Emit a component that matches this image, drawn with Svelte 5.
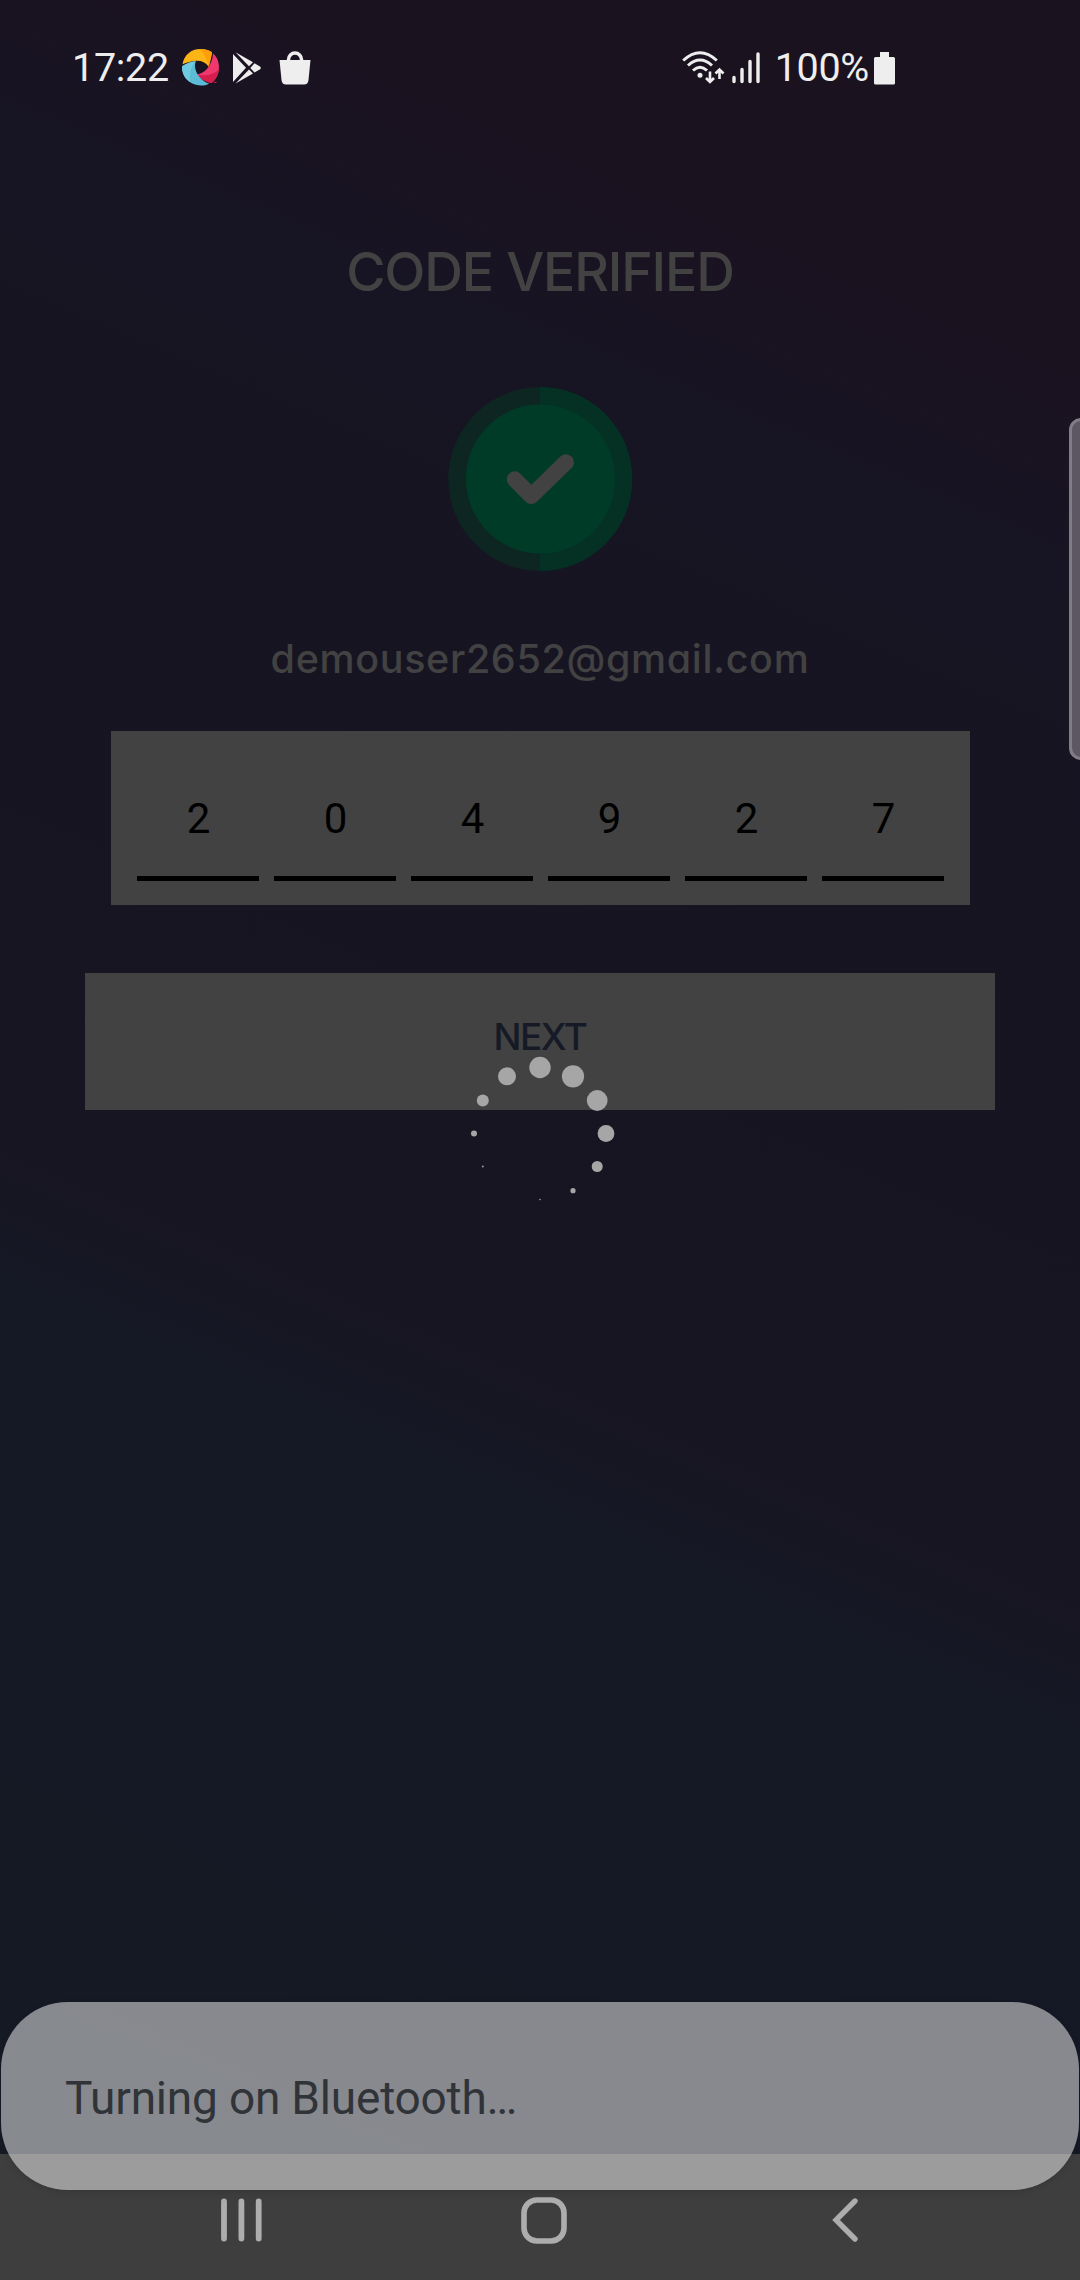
<script>
  const digits = ['2', '0', '4', '9', '2', '7'];
  const dots = [
    [72.5, 12.5, 10.7], [105.5, 21.3, 11.1], [129.7, 45.5, 10.4], [138.5, 78.5, 8.4],
    [129.7, 111.5, 5.5], [105.5, 135.7, 2.6], [72.5, 144.5, 0.8], [15.3, 111.5, 0.9],
    [6.5, 78.5, 3], [15.3, 45.5, 6], [39.5, 21.3, 9],
  ];
</script>

<div class="screen">
  <header class="status">
    <div class="left">
      <span class="time">17:22</span>
      <svg class="swirl" viewBox="0 0 38 38">
        <path d="M.5 15.5C2 6 9.500 0 18.500 0 24 0 28 1.500 30.500 3.500 29.500 9 28.500 13.500 27 18 22 10.500 13 10.500 .5 15.500Z" fill="#fdb515" />
        <path d="M18.500 0C24 0 28 1.500 30.500 3.500L27 18C26 12 23 5 18.500 0Z" fill="#ff9d0a" />
        <path d="M31.500 4.500C36 8.500 38 14 37.300 21 36.500 28 33 32 30 34.500 23.500 33 18 30 15 25.500 23 25 30.500 17 31.500 4.500Z" fill="#f0386f" />
        <path d="M37.300 21C36.500 28 33 32 30 34.500 23.500 33 18 30 15 25.500 24 28 32 26 37.300 21Z" fill="#d81e4c" />
        <path d="M0 17.500C5 14 9 12.800 14 12.300 11 19 16 31 27.500 35.200 22 38 14.500 37.500 9.500 34.500 3 30.500 0 25 0 17.500Z" fill="#5cbcd6" />
        <path d="M0 17.500C5 14 9 12.800 14 12.300 9 17 7 24 8.500 33.800 2.500 30 0 24.500 0 17.500Z" fill="#70cbe0" />
        <path d="M32.500 33.800H35" stroke="#d81e4c" stroke-width="1" />
      </svg>
      <svg class="play" viewBox="0 0 28 32">
        <g fill="#eee">
          <path d="M0 2 13 15.800 0 30Z" />
          <path d="M2.500 .3 20 10.300 16 14.300Z" />
          <path d="M2.500 31.500 16 17.500 20 21.500Z" />
          <path d="M21.500 11.200 27 14.400Q28.600 15.900 27 17.300L21.500 20.600 17.300 15.900Z" />
        </g>
      </svg>
      <svg class="bag" viewBox="0 0 32 34">
        <path d="M9.500 11V8.500a6.500 6.500 0 0 1 13 0V11" fill="none" stroke="#eee" stroke-width="3.500" />
        <path d="M.5 9H31.500L29.500 29Q29 33.500 25 33.500H7Q3 33.500 2.500 29Z" fill="#eee" />
      </svg>
    </div>
    <div class="right">
      <svg class="wifi" viewBox="0 0 42 34">
        <g fill="none" stroke="#eee" stroke-width="3">
          <path d="M1.200 9.500Q18 -6 34.800 9.500" />
          <path d="M6 14.500Q18 3.500 30 14.500" />
          <path d="M11 19.500Q18 13 25 19.500" />
          <path d="M28 20.500V31M24 27l4 4 4-4M37.500 28V18.500M33.500 22.500l4-4 4 4" stroke-width="2.600" />
        </g>
        <circle cx="18" cy="24.300" r="2.500" fill="#eee" />
      </svg>
      <svg class="signal" viewBox="0 0 28 32">
        <path d="M2 25.500V29.500M10 17.500V29.500M18 9.500V29.500M26 2V29.500" fill="none" stroke="#eee" stroke-width="3.400" stroke-linecap="round" />
      </svg>
      <span class="percent">100%</span>
      <svg class="battery" viewBox="0 0 21 33">
        <path d="M6 0H15V5H19.500Q21 5 21 6.500V31Q21 32.500 19.500 32.500H1.500Q0 32.500 0 31V6.500Q0 5 1.500 5H6Z" fill="#eee" />
      </svg>
    </div>
  </header>

  <main>
    <h1>CODE VERIFIED</h1>
    <svg class="badge" viewBox="0 0 184 184">
      <circle cx="92.300" cy="92" r="92" fill="#0d2622" />
      <path d="M92 0a92.300 92 0 0 1 0 184Z" fill="#053124" />
      <circle cx="92.500" cy="92" r="74.600" fill="#003b27" />
      <path d="M66.700 92.300 83.300 109 118 75.300" fill="none" stroke="#424242" stroke-width="16" stroke-linecap="round" stroke-linejoin="round" />
    </svg>
    <p class="email">demouser2652@gmail.com</p>
    <div class="code">
      {#each digits as digit}
        <span class="digit">{digit}</span>
      {/each}
    </div>
    <button>NEXT</button>
  </main>

  <nav>
    <svg class="recents" viewBox="0 0 41 44">
      <path d="M3 3.500V40.500M20.400 3.500V40.500M37.700 3.500V40.500" fill="none" stroke="#adadad" stroke-width="5.800" stroke-linecap="round" />
    </svg>
    <svg class="home" viewBox="0 0 46 47">
      <rect x="3" y="3" width="40" height="41" rx="13" fill="none" stroke="#adadad" stroke-width="5.600" />
    </svg>
    <svg class="back" viewBox="0 0 26 44">
      <path d="M23 3 4 22 23 41" fill="none" stroke="#adadad" stroke-width="5.400" stroke-linecap="round" />
    </svg>
  </nav>

  <svg class="spinner" viewBox="0 0 145 146">
    {#each dots as [x, y, r]}
      <circle cx={x} cy={y} {r} fill="#a6a6a6" />
    {/each}
  </svg>
  <div class="edge-handle"></div>
  <div class="toast">Turning on Bluetooth…</div>
</div>

<style>
  :global(body) { margin: 0; }
  .screen {
    position: relative;
    display: flex;
    flex-direction: column;
    box-sizing: border-box;
    width: 1080px;
    height: 2280px;
    overflow: hidden;
    font-family: Roboto, sans-serif;
    background: linear-gradient(23deg, #151a24 0%, #151825 36%, #171521 42%, #171423 79%, #1b1220 87%, #1b1220 100%);
  }
  svg { display: block; flex: none; overflow: visible; }
  .status {
    display: flex;
    justify-content: space-between;
    height: 136px;
    padding: 0 185px 0 72px;
    color: #eee;
    font-size: 39.500px;
    line-height: 136px;
  }
  .left, .right { display: flex; align-items: center; }
  .time { width: 110px; letter-spacing: -0.300px; white-space: nowrap; }
  .swirl { width: 37.500px; height: 37.500px; }
  .play { width: 28px; height: 32px; margin-left: 13.500px; }
  .bag { width: 32px; height: 34px; margin-left: 18px; }
  .wifi { width: 42px; height: 34px; }
  .signal { width: 28px; height: 32px; margin-left: 8px; }
  .percent {
    display: flex;
    justify-content: flex-end;
    width: 95px;
    margin-left: 14px;
    letter-spacing: -0.300px;
    white-space: nowrap;
  }
  .battery { width: 21px; height: 33px; margin-left: 5px; }
  main {
    flex: 1;
    display: flex;
    flex-direction: column;
    align-items: center;
    font-family: Inter, sans-serif;
    font-feature-settings: 'cv11';
  }
  h1 {
    margin: 101px 0 0;
    color: #424242;
    font-size: 53.600px;
    font-weight: 500;
    letter-spacing: -1.150px;
    line-height: 69px;
    white-space: nowrap;
  }
  .badge { width: 184px; height: 184px; margin-top: 81px; }
  .email {
    margin: 58px 0 0;
    color: #424242;
    font-size: 39.500px;
    font-weight: 500;
    letter-spacing: 0.650px;
    line-height: 60px;
    white-space: nowrap;
  }
  .code {
    display: flex;
    justify-content: center;
    align-items: flex-end;
    gap: 15px;
    box-sizing: border-box;
    width: 859px;
    height: 174px;
    margin-top: 42px;
    padding-bottom: 24px;
    background: #424242;
  }
  .digit {
    box-sizing: border-box;
    width: 122px;
    height: 88px;
    padding-left: 2px;
    border-bottom: 5px solid #000;
    color: #000;
    font: 400 42px/52px Roboto, sans-serif;
    text-align: center;
  }
  button {
    width: 910px;
    height: 137px;
    margin-top: 68px;
    padding: 0 0 9px;
    border: 0;
    color: #151a26;
    background: #424242;
    font: 500 37px Inter, sans-serif;
    letter-spacing: -1.500px;
    line-height: 128px;
  }
  nav {
    display: flex;
    align-items: center;
    box-sizing: border-box;
    height: 126px;
    padding: 6px 0 0 221px;
    background: #3e3e3e;
  }
  .recents { width: 41px; height: 44px; }
  .home { width: 46px; height: 47px; margin-left: 258.500px; }
  .back { width: 26px; height: 44px; margin-left: 265.500px; }
  .spinner {
    position: absolute;
    left: 467.500px;
    top: 1054.500px;
    width: 145px;
    height: 146px;
    transform: translateX(-0.500px);
  }
  .edge-handle {
    position: absolute;
    left: 1069px;
    top: 418px;
    box-sizing: border-box;
    width: 30px;
    height: 342px;
    border: 3px solid #817c86;
    border-radius: 12px;
    background: #5c5763;
  }
  .toast {
    position: absolute;
    left: 1px;
    top: 2002px;
    box-sizing: border-box;
    width: 1078px;
    height: 188px;
    padding-left: 64px;
    border-radius: 67px;
    color: #303338;
    background: rgba(250, 250, 250, 0.5);
    box-shadow: 0 2px 6px rgba(0, 0, 0, 0.12);
    font-size: 46px;
    letter-spacing: -0.200px;
    line-height: 193px;
  }
</style>
